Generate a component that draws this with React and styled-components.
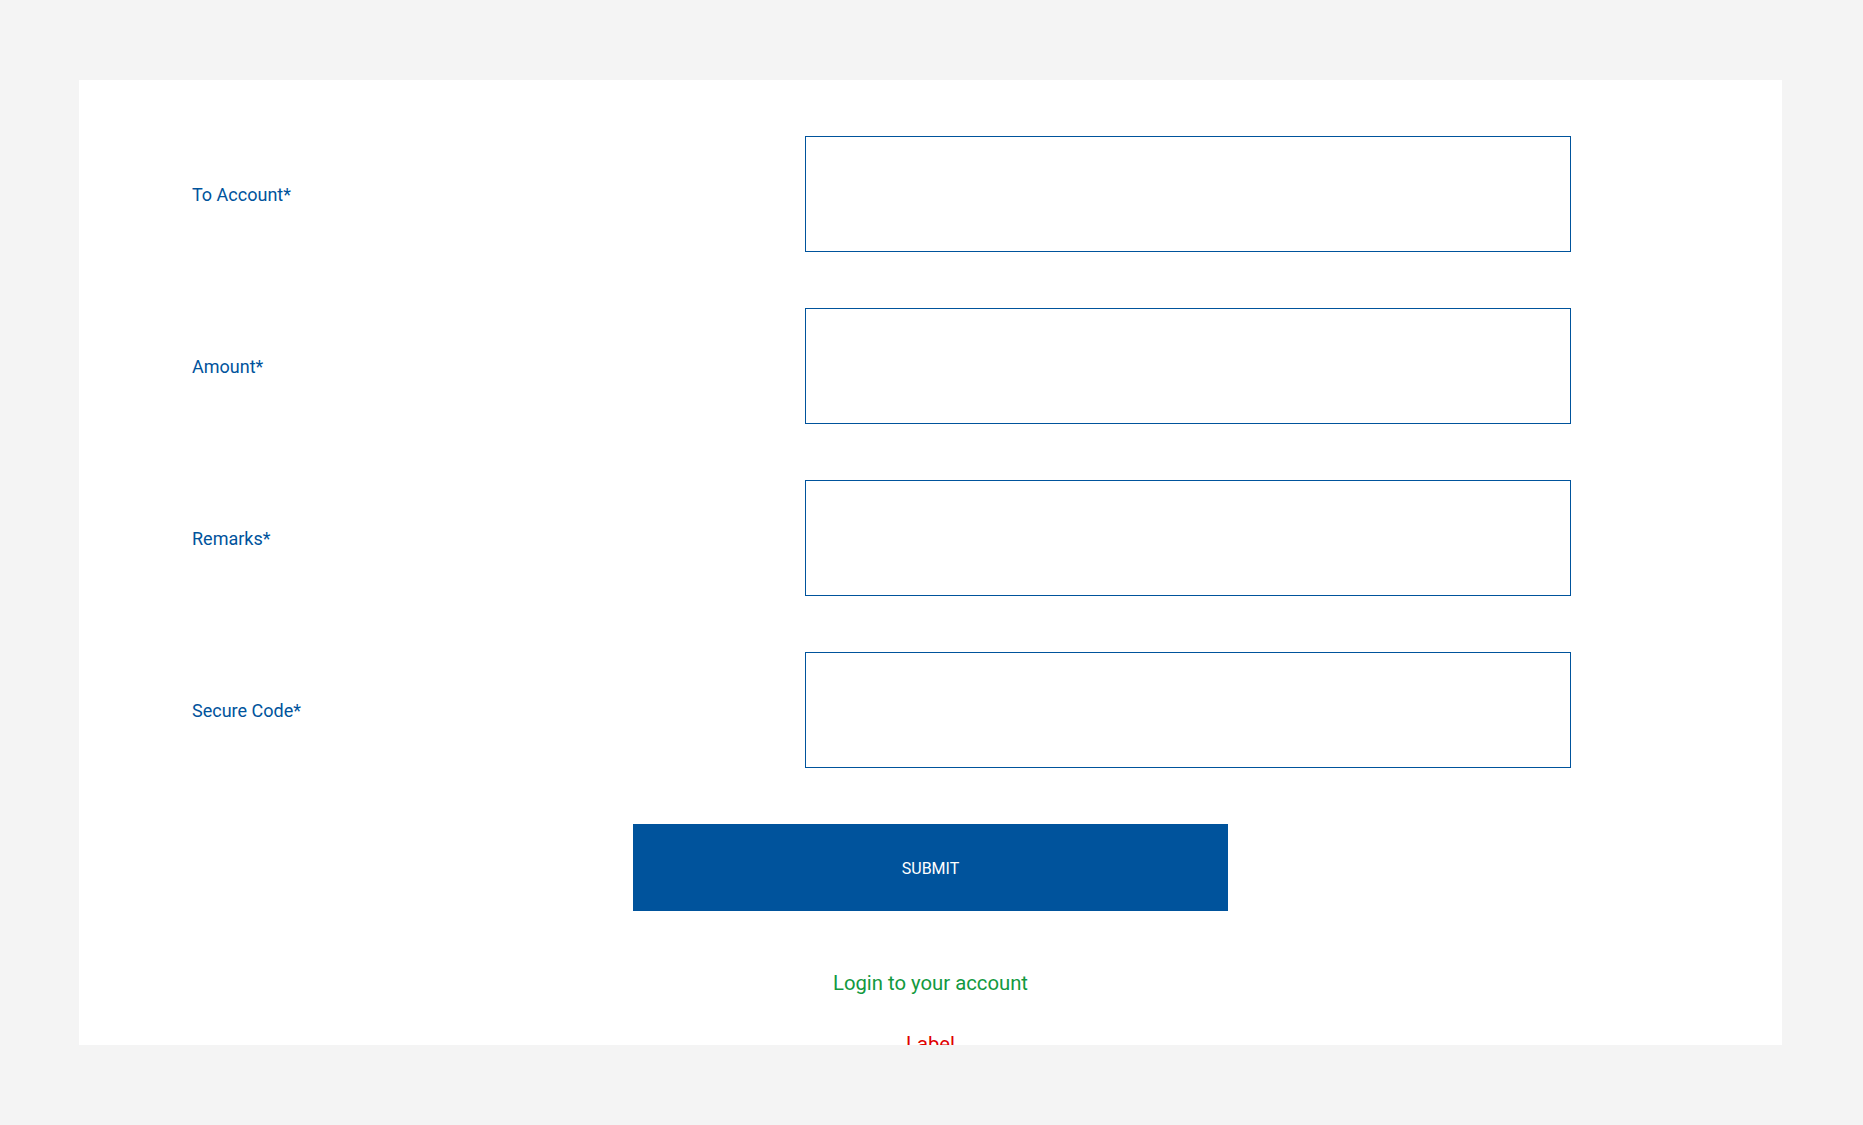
import React from "react";
import styled, { createGlobalStyle } from "styled-components";

const Global = createGlobalStyle`
  html, body { margin: 0; padding: 0; }
  body {
    background: #f4f4f4;
    font-family: Roboto, "Liberation Sans", Arial, sans-serif;
  }
  * { box-sizing: border-box; }
`;

const Page = styled.div`
  height: 100vh;
  padding: 80px 81px 80px 79px;
  display: flex;
  flex-direction: column;
`;

const Card = styled.div`
  flex: 1;
  background: #ffffff;
  overflow: hidden;
  padding: 56px 0 0 113px;
  display: flex;
  flex-direction: column;
`;

const Form = styled.form`
  display: flex;
  flex-direction: column;
  gap: 56px;
`;

const Row = styled.div`
  display: grid;
  grid-template-columns: 613px 766px;
  align-items: center;
`;

const Label = styled.label`
  color: #00539c;
  font-size: 18px;
  line-height: 22px;
  padding-top: 2px;
`;

const Input = styled.input`
  height: 116px;
  width: 100%;
  border: 1px solid #00539c;
  border-radius: 0;
  background: #fff;
  outline: none;
  font-family: inherit;
  font-size: 18px;
  padding: 0 16px;
`;

const ButtonRow = styled.div`
  display: flex;
  padding-left: 441px;
`;

const SubmitButton = styled.button`
  width: 595px;
  height: 87px;
  background: #00539c;
  color: #ffffff;
  border: none;
  border-radius: 0;
  font-family: inherit;
  font-size: 16px;
  text-transform: uppercase;
  cursor: pointer;
  padding-top: 2px;
`;

const Footer = styled.div`
  display: flex;
  flex-direction: column;
  align-items: center;
  margin-left: -113px;
  margin-top: 60px;
  gap: 37px;
`;

const LinkText = styled.a`
  color: ${(p) => p.$color};
  font-size: 20.3px;
  line-height: normal;
  text-decoration: none;
  cursor: pointer;
`;

const fields = ["To Account*", "Amount*", "Remarks*", "Secure Code*"];

export default function App() {
  return (
    <>
      <Global />
      <Page>
        <Card>
          <Form onSubmit={(e) => e.preventDefault()}>
            {fields.map((f) => (
              <Row key={f}>
                <Label>{f}</Label>
                <Input type="text" />
              </Row>
            ))}
            <ButtonRow>
              <SubmitButton type="submit">Submit</SubmitButton>
            </ButtonRow>
          </Form>
          <Footer>
            <LinkText $color="#12993f">Login to your account</LinkText>
            <LinkText $color="#e00000">Label</LinkText>
          </Footer>
        </Card>
      </Page>
    </>
  );
}
